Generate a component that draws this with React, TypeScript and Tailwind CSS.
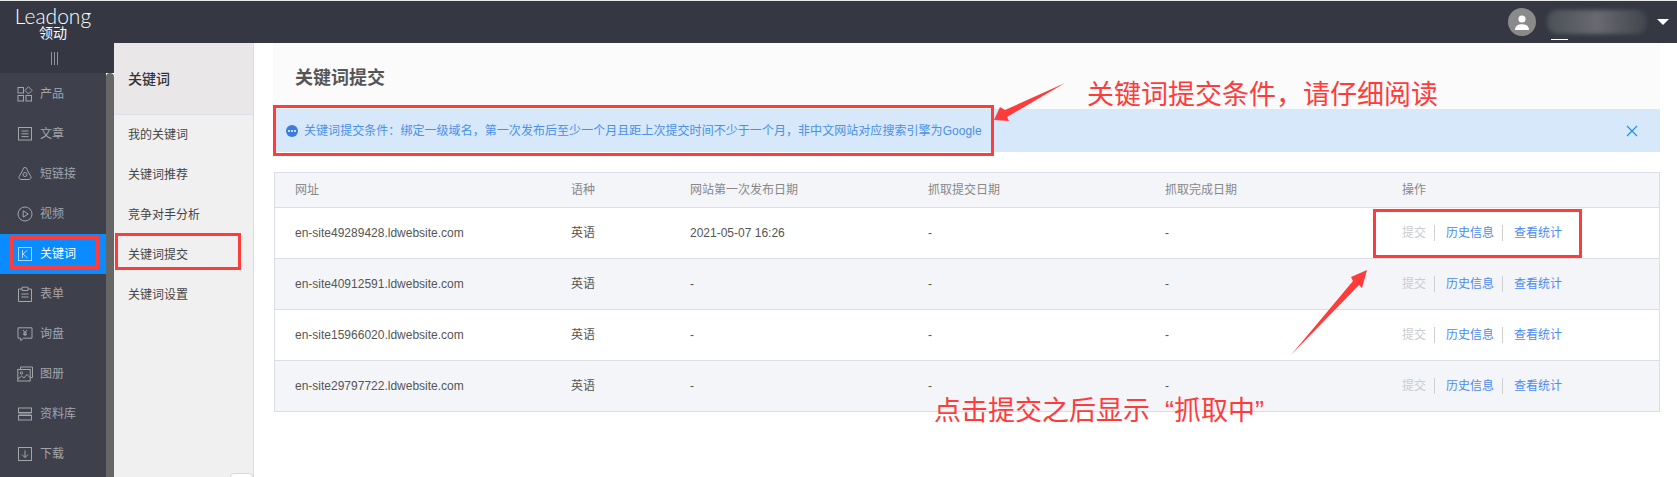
import type { ReactNode } from "react";

const FONT = { fontFamily: '"Liberation Sans","Noto Sans CJK SC",sans-serif' };

function Ico({ children }: { children: ReactNode }) {
  return (
    <svg width="16" height="16" viewBox="0 0 16 16" fill="none" stroke="currentColor" strokeWidth="1" className="shrink-0">
      {children}
    </svg>
  );
}

const NAV: { label: string; active?: boolean; icon: ReactNode }[] = [
  {
    label: "产品",
    icon: (
      <Ico>
        <rect x="1" y="1.5" width="5.5" height="5.5" />
        <path d="M11.500 .8l3.600 3.600-3.600 3.600-3.600-3.600z" />
        <rect x="1" y="9.500" width="5.500" height="5.500" />
        <rect x="9" y="9.500" width="5.500" height="5.500" />
      </Ico>
    ),
  },
  {
    label: "文章",
    icon: (
      <Ico>
        <rect x="1.500" y="1.500" width="13" height="12.500" />
        <path d="M4.500 5h7M4.500 7.800h7M4.500 10.600h7" />
      </Ico>
    ),
  },
  {
    label: "短链接",
    icon: (
      <Ico>
        <circle cx="8" cy="8.500" r="2" />
        <path d="M8 1.500a2 2 0 0 1 2 2.200l3.200 5.600a2.400 2.400 0 0 1-1 4.200H3.800a2.400 2.400 0 0 1-1-4.200L6 3.700a2 2 0 0 1 2-2.200z" />
      </Ico>
    ),
  },
  {
    label: "视频",
    icon: (
      <Ico>
        <circle cx="8" cy="8" r="7" />
        <path d="M6.200 4.800l5 3.200-5 3.200z" />
      </Ico>
    ),
  },
  {
    label: "关键词",
    active: true,
    icon: (
      <Ico>
        <rect x="1.500" y="1.500" width="13" height="13" stroke="#a8d4ff" />
        <path d="M5.500 4v8M10.500 4L6 8l4.500 4" stroke="#a8d4ff" />
      </Ico>
    ),
  },
  {
    label: "表单",
    icon: (
      <Ico>
        <path d="M5 3H1.500v12.500h13V3H11" />
        <path d="M5 1.200h6V4.500H5zM4.500 8h7M4.500 11h7" />
      </Ico>
    ),
  },
  {
    label: "询盘",
    icon: (
      <Ico>
        <path d="M1 1.800h14v10.400H6.500l-2.800 2.400v-2.400H1z" />
        <path d="M6 4l2 2.400L10 4M8 6.400V10M6.200 7h3.600M6.200 8.600h3.600" />
      </Ico>
    ),
  },
  {
    label: "图册",
    icon: (
      <Ico>
        <path d="M3.500 3V1h12v10.500h-2" />
        <rect x=".8" y="3.500" width="12.400" height="11.500" />
        <circle cx="4.500" cy="7" r="1.200" />
        <path d="M1 13l3.500-3 2.500 2 3-3.500 3 3" />
      </Ico>
    ),
  },
  {
    label: "资料库",
    icon: (
      <Ico>
        <rect x="1.500" y="2" width="13" height="4.500" />
        <rect x="1.500" y="9.500" width="13" height="4.500" />
        <path d="M1.500 8h13" />
      </Ico>
    ),
  },
  {
    label: "下载",
    icon: (
      <Ico>
        <rect x="1.500" y="1.500" width="13" height="13" />
        <path d="M8 4.500v7M5 8.600l3 3 3-3" />
      </Ico>
    ),
  },
];

const SUB = ["我的关键词", "关键词推荐", "竞争对手分析", "关键词提交", "关键词设置"];

const COLS = "grid grid-cols-[276px_119px_238px_237px_237px_1fr] items-center pl-5";

const ROWS = [
  { site: "en-site49289428.ldwebsite.com", first: "2021-05-07 16:26" },
  { site: "en-site40912591.ldwebsite.com", first: "-" },
  { site: "en-site15966020.ldwebsite.com", first: "-" },
  { site: "en-site29797722.ldwebsite.com", first: "-" },
];

function Sidebar() {
  return (
    <aside className="w-[114px] shrink-0 flex flex-col">
      <div className="h-[30px] bg-[#353843] flex items-center justify-center gap-[2px] pr-[6px]">
        <span className="w-px h-[13px] bg-[#8f949c]" />
        <span className="w-px h-[13px] bg-[#8f949c]" />
        <span className="w-px h-[13px] bg-[#8f949c]" />
      </div>
      <div className="flex flex-1 min-h-0">
        <div className="w-[106px] bg-[#3e404c] pt-[1px]">
          {NAV.map((n) => (
            <div
              key={n.label}
              className={
                n.active
                  ? "h-[40px] flex items-center gap-[7px] pl-[17px] text-xs bg-[#0a8bff] text-white"
                  : "h-[40px] flex items-center gap-[7px] pl-[17px] text-xs text-[#a3a5ab]"
              }
            >
              {n.icon}
              <span>{n.label}</span>
            </div>
          ))}
        </div>
        <div className="w-[8px] bg-[#666666] rounded-t-[4px]" />
      </div>
    </aside>
  );
}

function SubPanel() {
  return (
    <div className="relative w-[140px] shrink-0 bg-[#f0f0f1] border-r border-[#dcdcdf]">
      <div className="h-[72px] bg-[#e9e7e8] border-b border-[#dde0e8] flex items-center pl-[14px] text-sm font-medium text-[#333]">
        关键词
      </div>
      <div>
        {SUB.map((s) => (
          <div key={s} className="h-[40px] flex items-center pl-[14px] text-xs text-[#444]">
            {s}
          </div>
        ))}
      </div>
      <div className="absolute right-0 bottom-[-8px] w-[23px] h-[12px] bg-white border border-[#d8d8d8] rounded-t-[4px]" />
    </div>
  );
}

function Ops() {
  return (
    <div className="flex items-center text-xs whitespace-nowrap">
      <span className="text-[#cccccc]">提交</span>
      <span className="w-px h-[16px] bg-[#cfcfcf] ml-[8px] mr-[11px]" />
      <span className="text-[#4c8bf0]">历史信息</span>
      <span className="w-px h-[16px] bg-[#cfcfcf] ml-[8px] mr-[11px]" />
      <span className="text-[#4c8bf0]">查看统计</span>
    </div>
  );
}

function Content() {
  return (
    <main className="flex-1 pl-[19px] pr-[17px] min-w-0">
      <div className="h-[66px] bg-[#fbfbfc] flex items-center pl-[22px] text-lg font-semibold text-[#555] pt-[4px]">
        关键词提交
      </div>
      <div className="h-[43px] bg-[#d7e8fa] flex items-center pl-[13px] pr-[22px] text-xs text-[#4a90e8]">
        <span className="w-[12px] h-[12px] rounded-full bg-[#3b7ce0] flex items-center justify-center gap-[1px] shrink-0 mr-[6px]">
          <span className="w-[2px] h-[2px] rounded-full bg-white" />
          <span className="w-[2px] h-[2px] rounded-full bg-white" />
          <span className="w-[2px] h-[2px] rounded-full bg-white" />
        </span>
        <span className="flex-1 tracking-[0.05px]">
          关键词提交条件：绑定一级域名，第一次发布后至少一个月且距上次提交时间不少于一个月，非中文网站对应搜索引擎为Google
        </span>
        <svg width="12" height="12" viewBox="0 0 12 12" stroke="#1d8cf0" strokeWidth="1.100">
          <path d="M1 1l10 10M11 1L1 11" />
        </svg>
      </div>
      <div className="mt-[20px] ml-px border border-[#dcdee6] text-xs">
        <div className={`${COLS} h-[34px] bg-[#f4f5f9] text-[#888]`}>
          <span>网址</span>
          <span>语种</span>
          <span>网站第一次发布日期</span>
          <span>抓取提交日期</span>
          <span>抓取完成日期</span>
          <span>操作</span>
        </div>
        {ROWS.map((r, i) => (
          <div
            key={r.site}
            className={
              i % 2 === 0
                ? `${COLS} h-[51px] border-t border-[#dcdee6] bg-white text-[#555]`
                : `${COLS} h-[51px] border-t border-[#dcdee6] bg-[#f4f5f9] text-[#555]`
            }
          >
            <span>{r.site}</span>
            <span>英语</span>
            <span>{r.first}</span>
            <span>-</span>
            <span>-</span>
            <Ops />
          </div>
        ))}
      </div>
    </main>
  );
}

function Annotations() {
  return (
    <>
      <div className="absolute left-[273px] top-[105px] w-[721px] h-[51px] border-[3px] border-[#ff3b3b]" />
      <div className="absolute left-[10px] top-[236px] w-[89px] h-[33px] border-[3px] border-[#ff3b3b]" />
      <div className="absolute left-[115px] top-[233px] w-[126px] h-[37px] border-[3px] border-[#ff3b3b]" />
      <div className="absolute left-[1373px] top-[209px] w-[209px] h-[49px] border-[3px] border-[#ff3b3b]" />
      <div className="absolute left-[1087px] top-[77px] text-[27px] leading-[36px] text-[#ff3b3b] whitespace-nowrap">
        关键词提交条件，请仔细阅读
      </div>
      <div className="absolute left-[934px] top-[393px] text-[27px] leading-[36px] text-[#ff3b3b] whitespace-nowrap">
        点击提交之后显示<span className="ml-[15px]">“</span>抓取中”
      </div>
      <svg className="absolute left-0 top-0 pointer-events-none" width="1677" height="477">
        <path d="M1065 83L1005 110 1000 107 994 120 1009 121 1007 117z" fill="#ff3b3b" />
        <path d="M1291 355L1353 281 1351 277 1367 270 1362 288 1359 285z" fill="#ff3b3b" />
      </svg>
    </>
  );
}

export default function App() {
  return (
    <div className="relative w-[1677px] h-[477px] overflow-hidden bg-white flex flex-col" style={FONT}>
      <div className="h-px bg-[#e8e8e8] shrink-0" />
      <header className="h-[42px] bg-[#353843] shrink-0 flex items-center relative">
        <div className="w-[106px] flex flex-col items-center text-white pt-[2px]">
          <span className="text-[21px] font-light leading-[20px]" style={{ fontFamily: "Lato, sans-serif" }}>
            Leadong
          </span>
          <span className="text-[14px] leading-[14px]">领动</span>
        </div>
        <div className="ml-auto flex items-center pr-[8px]">
          <div className="w-[28px] h-[28px] rounded-full bg-[#8a8a8a] flex items-center justify-center">
            <svg width="14" height="15" viewBox="0 0 14 15" fill="#fff">
              <circle cx="7" cy="4" r="3.600" />
              <path d="M0 15c0-4 3-5.800 7-5.800s7 1.800 7 5.800z" />
            </svg>
          </div>
          <div className="relative ml-[11px] w-[100px] h-[24px]">
            <div className="w-full h-full rounded-[10px] bg-linear-to-r from-[#4c5058] via-[#6a6a70] to-[#42454d] blur-[2px]" />
            <span className="absolute left-[4px] -bottom-[6px] w-[17px] h-[1px] bg-white" />
          </div>
          <div className="ml-[10px] w-0 h-0 border-x-[6px] border-x-transparent border-t-[6px] border-t-white" />
        </div>
      </header>
      <div className="flex flex-1 min-h-0">
        <Sidebar />
        <SubPanel />
        <Content />
      </div>
      <Annotations />
    </div>
  );
}
